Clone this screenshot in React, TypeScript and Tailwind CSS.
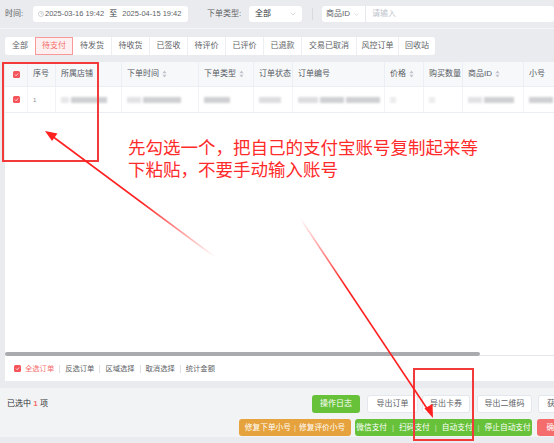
import { ChevronDown } from 'lucide-react';

const tabs = [
  { t: '全部', w: 'w-[30px]' },
  { t: '待支付', w: 'w-[38px]' },
  { t: '待发货', w: 'w-[38px]' },
  { t: '待收货', w: 'w-[38px]' },
  { t: '已签收', w: 'w-[38px]' },
  { t: '待评价', w: 'w-[38px]' },
  { t: '已评价', w: 'w-[38px]' },
  { t: '已退款', w: 'w-[38px]' },
  { t: '交易已取消', w: 'w-[55px]' },
  { t: '风控订单', w: 'w-[42px]' },
  { t: '回收站', w: 'w-[37px]' },
];

const columns = [
  { label: '', w: 'w-[22px]', sort: false },
  { label: '序号', w: 'w-[28px]', sort: false },
  { label: '所属店铺', w: 'w-[66px]', sort: false },
  { label: '下单时间', w: 'w-[77px]', sort: true },
  { label: '下单类型', w: 'w-[55px]', sort: true },
  { label: '订单状态', w: 'w-[39px]', sort: false },
  { label: '订单编号', w: 'w-[92px]', sort: false },
  { label: '价格', w: 'w-[39px]', sort: true },
  { label: '购买数量', w: 'w-[39px]', sort: false },
  { label: '商品ID', w: 'w-[61px]', sort: true },
  { label: '小号', w: 'w-[80px]', sort: false },
];

// blurred placeholders in row 1, per column
const blurred: Record<number, string[]> = {
  2: ['w-[8px] opacity-50', 'w-[36px]'],
  3: ['w-[14px] opacity-60', 'w-[38px]'],
  4: ['w-[26px]'],
  5: ['w-[22px] opacity-70'],
  6: ['w-[20px] opacity-70', 'w-[24px]', 'w-[34px]'],
  7: ['w-[6px] opacity-40'],
  8: ['w-[6px] opacity-40'],
  9: ['w-[14px] opacity-60', 'w-[30px]'],
  10: ['w-[24px]'],
};

const footerLinks = ['反选订单', '区域选择', '取消选择', '统计金额'];

function Sort() {
  return (
    <svg width="5" height="8" viewBox="0 0 5 8" className="ml-[3px]">
      <path d="M2.5 0.6L4.6 3.2H0.4Z" fill="#c0c4cc" />
      <path d="M2.5 7.4L4.6 4.8H0.4Z" fill="#c0c4cc" />
    </svg>
  );
}

function Check() {
  return (
    <span className="flex h-[7px] w-[7px] shrink-0 items-center justify-center rounded-[1.5px] bg-[#f5545a]">
      <svg width="5" height="5" viewBox="0 0 10 10">
        <path d="M2 5.2l2.2 2.2L8.2 3" stroke="white" strokeWidth="1.6" fill="none" />
      </svg>
    </span>
  );
}

export default function App() {
  return (
    <div className="relative h-[443px] w-[554px] overflow-hidden bg-[#eaebef] font-['Liberation_Sans','Noto_Sans_CJK_SC',sans-serif] text-[8px] leading-none text-[#606266]">
      {/* filter bar */}
      <div className="flex h-[29px] items-center whitespace-nowrap border-b border-[#f4f5f7]">
        <span className="ml-[5px] w-[28px] shrink-0">时间:</span>
        <div className="flex h-[16px] w-[155px] shrink-0 items-center rounded-[3px] bg-white pl-[5px] text-[7.5px] text-[#606266]">
          <svg width="6" height="6" viewBox="0 0 10 10" className="mr-[1px]">
            <circle cx="5" cy="5" r="4.2" stroke="#b0b3b8" strokeWidth="1" fill="none" />
            <path d="M5 2.6V5h2" stroke="#b0b3b8" strokeWidth="1" fill="none" />
          </svg>
          <span>2025-03-16 19:42</span>
          <span className="mx-[5px] text-[8px] text-[#303133]">至</span>
          <span>2025-04-15 19:42</span>
        </div>
        <span className="ml-[19px] w-[42px] shrink-0">下单类型:</span>
        <div className="flex h-[16px] w-[53px] shrink-0 items-center justify-between rounded-[3px] bg-white pl-[6px] pr-[5px] text-[#303133]">
          <span>全部</span>
          <ChevronDown size={8} strokeWidth={1.5} className="text-[#b0b3b8]" />
        </div>
        <span className="ml-[10px] h-[12px] w-px shrink-0 bg-[#d8dadf]" />
        <div className="ml-[9px] flex h-[16px] flex-1 items-center rounded-[3px] bg-white">
          <div className="flex h-full w-[44px] items-center border-r border-[#e4e7ed] pl-[4px]">
            <span>商品ID</span>
            <ChevronDown size={7} strokeWidth={1.5} className="ml-[3px] text-[#b0b3b8]" />
          </div>
          <span className="ml-[6px] text-[#c0c4cc]">请输入</span>
        </div>
      </div>

      {/* tabs */}
      <div className="flex h-[33px] items-center">
        <div className="ml-[5px] flex h-[18px] overflow-hidden rounded-[3px] bg-white whitespace-nowrap">
          {tabs.map((t, i) => (
            <div
              key={t.t}
              className={`${t.w} flex items-center justify-center ${
                i === 1
                  ? 'border border-[#f89898] bg-[#fef0f0] text-[#f56c6c]'
                  : i === 0 || i === 2
                    ? ''
                    : 'border-l border-[#eceef2]'
              }`}
            >
              {t.t}
            </div>
          ))}
        </div>
      </div>

      {/* table panel */}
      <div className="ml-[5px] flex h-[319px] flex-col bg-white">
        <div className="flex h-[25px] shrink-0 border-b border-[#ebeef5] bg-[#f7f8fa] whitespace-nowrap text-[#555a62]">
          {columns.map((c, i) => (
            <div
              key={i}
              className={`${c.w} flex shrink-0 items-center ${i === 0 ? 'justify-center' : 'border-l border-[#ebeef5] pl-[5px]'}`}
            >
              {i === 0 ? <Check /> : c.label}
              {c.sort && <Sort />}
            </div>
          ))}
        </div>
        <div className="flex h-[26px] shrink-0 border-b border-[#ebeef5]">
          {columns.map((c, i) => (
            <div
              key={i}
              className={`${c.w} flex shrink-0 items-center ${i === 0 ? 'justify-center' : 'border-l border-[#f2f3f6] pl-[5px]'}`}
            >
              {i === 0 && <Check />}
              {i === 1 && <span className="text-[6px] text-[#8a8d93]">1</span>}
              {(blurred[i] ?? []).map((b, k) => (
                <span key={k} className={`${b} mr-[2px] h-[6px] bg-[#cfd0d3] blur-[1px]`} />
              ))}
              {i === 10 && <span className="text-[6px] text-[#8a8d93]">4</span>}
            </div>
          ))}
        </div>
        <div className="flex-1" />
        <div className="flex h-[5px] items-end">
          <div className="h-[4px] w-[475px] rounded-full bg-[#a9abaf]" />
          <div className="h-px flex-1 bg-[#e4e6ea]" />
        </div>
        <div className="flex h-[25px] items-center whitespace-nowrap pl-[9px] text-[7.3px]">
          <Check />
          <span className="ml-[4px] text-[#f56c6c]">全选订单</span>
          {footerLinks.map((l) => (
            <span key={l} className="flex items-center">
              <span className="mx-[5px] h-[8px] w-px bg-[#dcdfe6]" />
              <span>{l}</span>
            </span>
          ))}
        </div>
      </div>

      {/* bottom bar */}
      <div className="mt-[7px] h-[49px] bg-[#f2f3f5] pt-[7px] whitespace-nowrap">
        <div className="flex h-[18px] items-center">
          <span className="ml-[7px] w-[305px] shrink-0 text-[#303133]">
            已选中 <b className="text-[#f56c6c]">1</b> 项
          </span>
          <button className="h-[18px] w-[48px] shrink-0 rounded-[3px] bg-[#67c23a] text-white">操作日志</button>
          <button className="ml-[7px] h-[18px] w-[51px] shrink-0 rounded-[3px] border border-[#e4e7ed] bg-white text-[#606266]">导出订单</button>
          <button className="ml-[4px] h-[18px] w-[48px] shrink-0 rounded-[3px] border border-[#e4e7ed] bg-white text-[#606266]">导出卡券</button>
          <button className="ml-[7px] h-[18px] w-[55px] shrink-0 rounded-[3px] border border-[#e4e7ed] bg-white text-[#606266]">导出二维码</button>
          <button className="ml-[6px] h-[18px] w-[50px] shrink-0 rounded-[3px] border border-[#e4e7ed] bg-white text-[#606266]">获取订单</button>
        </div>
        <div className="mt-[6px] flex h-[17px] items-center text-[7.7px]">
          <button className="ml-[239px] flex h-[17px] w-[112px] shrink-0 items-center justify-center rounded-[3px] bg-[#e6a23c] text-white">
            修复下单小号<span className="mx-[3px] text-white/60">|</span>修复评价小号
          </button>
          <button className="ml-[4px] flex h-[17px] w-[177px] shrink-0 items-center justify-center rounded-[3px] bg-[#67c23a] text-white">
            微信支付<span className="mx-[5px] text-white/60">|</span>扫码支付<span className="mx-[5px] text-white/60">|</span>自动支付<span className="mx-[5px] text-white/60">|</span>停止自动支付
          </button>
          <button className="ml-[5px] flex h-[17px] w-[50px] shrink-0 items-center justify-center rounded-[3px] bg-[#f56c6c] text-white">
            确认收货
          </button>
        </div>
      </div>

      {/* annotations */}
      <div className="pointer-events-none absolute left-[2px] top-[62px] h-[100px] w-[97px] border-2 border-[#f23a3a]" />
      <div className="pointer-events-none absolute left-[413px] top-[368px] h-[73px] w-[61px] border-2 border-[#f23a3a]" />
      <div className="pointer-events-none absolute left-[128px] top-[136px] font-['Noto_Sans_CJK_SC',sans-serif] text-[17.5px] leading-[22px] text-[#ff2b2b]">
        <div>先勾选一个，把自己的支付宝账号复制起来等</div>
        <div>下粘贴，不要手动输入账号</div>
      </div>
      <svg className="pointer-events-none absolute left-0 top-0" width="554" height="443" viewBox="0 0 554 443">
        <defs>
          <linearGradient id="g1" x1="215" y1="257" x2="50" y2="134" gradientUnits="userSpaceOnUse">
            <stop offset="0" stopColor="#ff2020" stopOpacity="0" />
            <stop offset="0.45" stopColor="#ff2020" stopOpacity="1" />
          </linearGradient>
          <linearGradient id="g2" x1="300" y1="218" x2="430" y2="412" gradientUnits="userSpaceOnUse">
            <stop offset="0" stopColor="#ff2020" stopOpacity="0" />
            <stop offset="0.35" stopColor="#ff2020" stopOpacity="1" />
          </linearGradient>
        </defs>
        <line x1="215" y1="257" x2="52" y2="136" stroke="url(#g1)" strokeWidth="1.6" />
        <path d="M45 131 L57.5 133.5 L52 141 Z" fill="#ff2020" />
        <line x1="300" y1="218" x2="428" y2="410" stroke="url(#g2)" strokeWidth="1.6" />
        <path d="M433 418 L424.5 408.5 L432.5 404 Z" fill="#ff2020" />
      </svg>
    </div>
  );
}
